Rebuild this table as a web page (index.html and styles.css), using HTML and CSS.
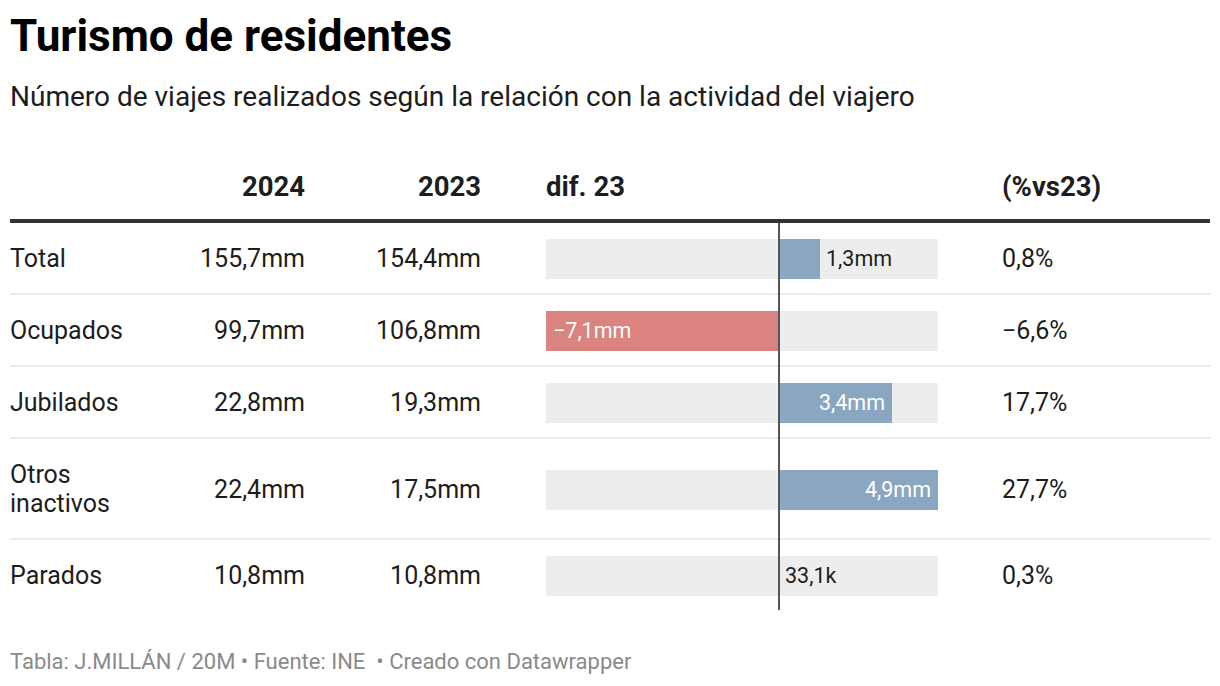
FILE: index.html
```html
<!DOCTYPE html>
<html lang="es">
<head>
<meta charset="utf-8">
<title>Turismo de residentes</title>
<link rel="stylesheet" href="styles.css">
</head>
<body>
<div class="chart">
  <h1 class="title">Turismo de residentes</h1>
  <p class="subtitle">Número de viajes realizados según la relación con la actividad del viajero</p>

  <div class="table">
    <div class="row head">
      <div class="cell label"></div>
      <div class="cell num">2024</div>
      <div class="cell num">2023</div>
      <div class="cell barcell">dif. 23</div>
      <div class="cell pct">(%vs23)</div>
    </div>

    <div class="body">
      <div class="row">
        <div class="cell label">Total</div>
        <div class="cell num">155,7mm</div>
        <div class="cell num">154,4mm</div>
        <div class="cell barcell">
          <div class="track">
            <div class="bar pos" style="left:232px;width:42px"></div>
            <span class="val out" style="left:280px">1,3mm</span>
          </div>
        </div>
        <div class="cell pct">0,8%</div>
      </div>

      <div class="row">
        <div class="cell label">Ocupados</div>
        <div class="cell num">99,7mm</div>
        <div class="cell num">106,8mm</div>
        <div class="cell barcell">
          <div class="track">
            <div class="bar neg" style="left:0;width:232px"></div>
            <span class="val in-left" style="left:7px">−7,1mm</span>
          </div>
        </div>
        <div class="cell pct">−6,6%</div>
      </div>

      <div class="row">
        <div class="cell label">Jubilados</div>
        <div class="cell num">22,8mm</div>
        <div class="cell num">19,3mm</div>
        <div class="cell barcell">
          <div class="track">
            <div class="bar pos" style="left:232px;width:114px"></div>
            <span class="val in-right" style="right:53px">3,4mm</span>
          </div>
        </div>
        <div class="cell pct">17,7%</div>
      </div>

      <div class="row">
        <div class="cell label">Otros inactivos</div>
        <div class="cell num">22,4mm</div>
        <div class="cell num">17,5mm</div>
        <div class="cell barcell">
          <div class="track">
            <div class="bar pos" style="left:232px;width:160px"></div>
            <span class="val in-right" style="right:7px">4,9mm</span>
          </div>
        </div>
        <div class="cell pct">27,7%</div>
      </div>

      <div class="row">
        <div class="cell label">Parados</div>
        <div class="cell num">10,8mm</div>
        <div class="cell num">10,8mm</div>
        <div class="cell barcell">
          <div class="track">
            <div class="bar pos" style="left:232px;width:1px"></div>
            <span class="val out" style="left:239px">33,1k</span>
          </div>
        </div>
        <div class="cell pct">0,3%</div>
      </div>

      <div class="zero-line"></div>
    </div>
  </div>

  <p class="footer">Tabla: J.MILLÁN / 20M • Fuente: INE &nbsp;• Creado con Datawrapper</p>
</div>
</body>
</html>
```

FILE: styles.css
```css
* { box-sizing: border-box; }

html, body {
  margin: 0;
  padding: 0;
  background: #ffffff;
}

body {
  font-family: Roboto, "Liberation Sans", Arial, sans-serif;
  color: #1d1d1d;
}

.chart {
  width: 1220px;
  padding: 0 10px;
}

.title {
  margin: 0;
  padding-top: 12px;
  font-size: 44px;
  line-height: 48px;
  font-weight: 700;
  color: #000000;
}

.subtitle {
  margin: 21px 0 0 0;
  font-size: 28px;
  line-height: 32px;
  font-weight: 400;
  color: #1d1d1d;
}

.table {
  width: 1200px;
}

.row {
  display: grid;
  grid-template-columns: 150px 145px 176px 521px 208px;
  align-items: center;
  font-size: 25px;
  line-height: 28px;
}

.row.head {
  font-size: 27.5px;
  font-weight: 700;
  padding-top: 60px;
  padding-bottom: 18px;
  border-bottom: 4px solid #333333;
}

.row.head .cell {
  padding-top: 0;
  padding-bottom: 0;
}

.body {
  position: relative;
}

.body .row {
  border-bottom: 2px solid #ececec;
}

.body .row:nth-child(5) {
  border-bottom: none;
}

.cell {
  padding: 21px 0 21px 0;
}

.body .cell {
  padding-top: 22px;
  padding-bottom: 20px;
}

.body .row:nth-child(4) .cell.label {
  line-height: 28.5px;
}

.cell.label {
  text-align: left;
}

.cell.num {
  text-align: right;
}

.body .cell.barcell,
.cell.barcell {
  padding: 0 64px 0 65px;
}

.cell.pct {
  text-align: left;
}

.track {
  position: relative;
  top: 1px;
  width: 392px;
  height: 40px;
  background: #ededed;
}

.bar {
  position: absolute;
  top: 0;
  bottom: 0;
}

.bar.pos { background: #8aa6c1; }
.bar.neg { background: #da8381; }

.val {
  position: absolute;
  top: 0;
  line-height: 40px;
  font-size: 21.5px;
  white-space: nowrap;
}

.val.out { color: #1d1d1d; }
.val.in-left, .val.in-right { color: #ffffff; }

.zero-line {
  position: absolute;
  top: 0;
  bottom: 0;
  left: 768px;
  width: 2px;
  background: #555555;
}

.footer {
  margin: 39px 0 0 0;
  font-size: 22px;
  line-height: 26px;
  color: #8a8a8a;
}
```
